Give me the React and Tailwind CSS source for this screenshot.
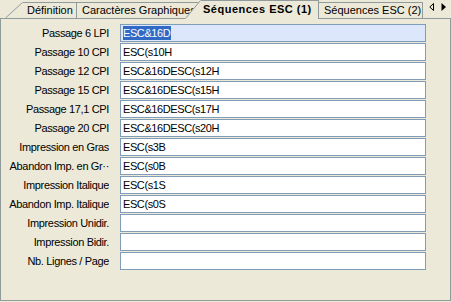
const rows = [
  ["Passage 6 LPI", "ESC&16D"],
  ["Passage 10 CPI", "ESC(s10H"],
  ["Passage 12 CPI", "ESC&16DESC(s12H"],
  ["Passage 15 CPI", "ESC&16DESC(s15H"],
  ["Passage 17,1 CPI", "ESC&16DESC(s17H"],
  ["Passage 20 CPI", "ESC&16DESC(s20H"],
  ["Impression en Gras", "ESC(s3B"],
  ["Abandon Imp. en Gr··", "ESC(s0B"],
  ["Impression Italique", "ESC(s1S"],
  ["Abandon Imp. Italique", "ESC(s0S"],
  ["Impression Unidir.", ""],
  ["Impression Bidir.", ""],
  ["Nb. Lignes / Page", ""],
];

export default function App() {
  return (
    <div className="w-[451px] h-[302px] bg-[#ECE9D8] font-['Liberation_Sans',Arial,sans-serif] text-[11px] text-black overflow-hidden flex flex-col">
      {/* tab strip */}
      <div className="flex h-[18px] items-end shrink-0">
        <div className="w-[5px] shrink-0" />
        <svg width="18" height="16" className="block shrink-0">
          <polygon points="0,16 17,0 18,0 18,16" fill="#ECE9D8" />
          <line x1="0.5" y1="16" x2="17.5" y2="0.5" stroke="#919B9C" />
        </svg>
        <div className="w-[54px] h-[16px] shrink-0 border-t border-r border-[#919B9C] pl-[4px] leading-[15px] whitespace-nowrap">
          Définition
        </div>
        <div className="w-[122px] h-[16px] shrink-0 border-t border-[#919B9C] pl-[5px] leading-[15px] whitespace-nowrap overflow-hidden">
          Caractères Graphiques
        </div>
        <svg width="16" height="19" className="block shrink-0 -ml-[14px] -mb-px relative z-10">
          <polygon points="0,19 15,0 16,0 16,19" fill="#ECE9D8" />
          <line x1="0.5" y1="18.5" x2="15.5" y2="0.5" stroke="#919B9C" />
        </svg>
        <div className="w-[118px] h-[19px] shrink-0 -mb-px relative z-10 bg-[#ECE9D8] border-t border-r border-[#919B9C] pl-[2px] leading-[17px] font-bold tracking-[0.5px] whitespace-nowrap overflow-hidden">
          Séquences ESC (1)
        </div>
        <div className="w-[104px] h-[16px] shrink-0 border-t border-r border-[#919B9C] pl-[5px] leading-[15px] whitespace-nowrap overflow-hidden">
          Séquences ESC (2)
        </div>
        <div className="flex-1 h-[18px] flex items-start pt-[3px] pl-[6px] gap-[6px]">
          <svg width="6" height="8" className="block">
            <polygon points="4.5,0.5 4.5,7.5 0.8,4" fill="none" stroke="#000" strokeWidth="1" />
          </svg>
          <svg width="6" height="8" className="block">
            <polygon points="0.5,0 0.5,8 5,4" fill="#000" />
          </svg>
        </div>
      </div>

      {/* panel */}
      <div className="h-[283px] w-[451px] border border-[#919B9C] pt-[5px] pl-[6px] flex flex-col gap-[1px]">
        {rows.map(([label, value], i) => (
          <div key={i} className="flex items-center h-[18px]">
            <div className="w-[102px] text-right whitespace-nowrap overflow-hidden leading-[18px] tracking-[-0.35px]">
              {label}
            </div>
            <div
              className={
                "ml-[11px] w-[306px] h-[18px] border border-[#7F9DB9] px-[2px] flex items-center whitespace-nowrap tracking-[-0.4px] " +
                (i === 0 ? "bg-[#DDE7FC]" : "bg-white")
              }
            >
              {i === 0 ? (
                <span className="bg-[#316AC5] text-white leading-[14px] inline-block pr-[1px]">{value}</span>
              ) : (
                <span className="leading-[14px]">{value}</span>
              )}
            </div>
          </div>
        ))}
      </div>
    </div>
  );
}
